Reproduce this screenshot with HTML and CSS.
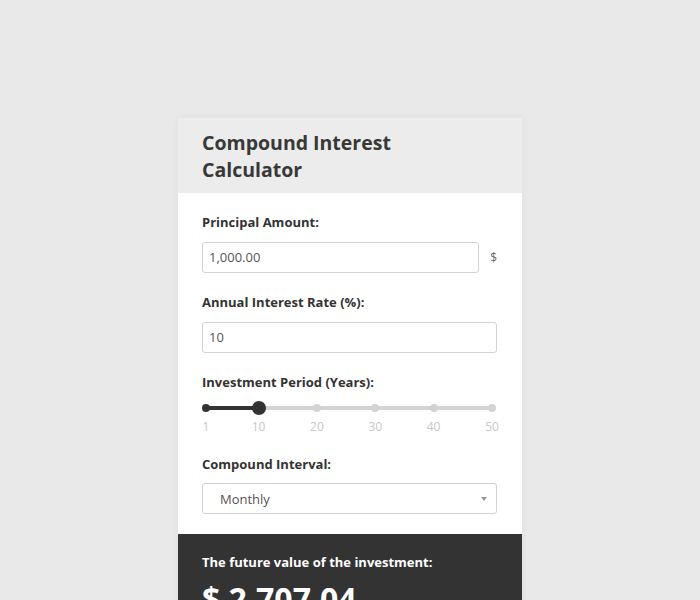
FILE: index.html
```html
<!DOCTYPE html>
<html lang="en">
<head>
<meta charset="utf-8">
<title>Compound Interest Calculator</title>
<link rel="stylesheet" href="styles.css">
</head>
<body>
<div class="card">
  <div class="card-head">
    <h1 class="title">Compound Interest Calculator</h1>
  </div>
  <div class="card-body">
    <div class="field">
      <label class="label">Principal Amount:</label>
      <div class="input-row">
        <div class="input">1,000.00</div>
        <span class="suffix">$</span>
      </div>
    </div>
    <div class="field">
      <label class="label">Annual Interest Rate (%):</label>
      <div class="input">10</div>
    </div>
    <div class="field field-slider">
      <label class="label">Investment Period (Years):</label>
      <div class="slider">
        <div class="track">
          <div class="track-fill" style="width:18.37%"></div>
          <span class="dot dot-on" style="left:0%"></span>
          <span class="dot" style="left:38.78%"></span>
          <span class="dot" style="left:59.18%"></span>
          <span class="dot" style="left:79.59%"></span>
          <span class="dot" style="left:100%"></span>
          <span class="handle" style="left:18.37%"></span>
        </div>
        <div class="ticks">
          <span class="tick" style="left:0%">1</span>
          <span class="tick" style="left:18.37%">10</span>
          <span class="tick" style="left:38.78%">20</span>
          <span class="tick" style="left:59.18%">30</span>
          <span class="tick" style="left:79.59%">40</span>
          <span class="tick" style="left:100%">50</span>
        </div>
      </div>
    </div>
    <div class="field field-last">
      <label class="label">Compound Interval:</label>
      <div class="select">
        <span>Monthly</span>
        <span class="caret"></span>
      </div>
    </div>
  </div>
  <div class="card-result">
    <div class="result-label">The future value of the investment:</div>
    <div class="result-value">$ 2,707.04</div>
  </div>
</div>
</body>
</html>
```
FILE: styles.css
```css
* { box-sizing: border-box; }
html, body { margin: 0; padding: 0; }
body {
  background: #e9e9e9;
  font-family: "Open Sans", "Noto Sans", "Liberation Sans", sans-serif;
  color: #333;
  padding-top: 118px;
}
.card {
  width: 344px;
  margin: 0 auto;
  background: #fff;
  box-shadow: 0 0 8px rgba(0,0,0,0.05);
  border-radius: 3px 3px 0 0;
}
.card-head {
  background: #ececec;
  padding: 11px 24px 10px;
  border-radius: 3px 3px 0 0;
}
.title {
  margin: 0;
  font-size: 19.5px;
  font-weight: 700;
  line-height: 27px;
  color: #383838;
  width: 220px;
}
.card-body {
  padding: 20px 25px 20px 24px;
}
.field { margin-bottom: 20px; }
.field-last { margin-bottom: 0; }
.field-slider { margin-bottom: 20px; }
.label {
  display: block;
  font-size: 13px;
  font-weight: 700;
  line-height: 18px;
  color: #333;
  margin-bottom: 11px;
}
.field-last .label { margin-bottom: 10px; }
.input-row {
  display: flex;
  align-items: center;
}
.input-row .input { flex: 1; }
.suffix {
  width: 18px;
  text-align: right;
  font-size: 12px;
  color: #666;
}
.input {
  height: 31px;
  border: 1px solid #d2d2d2;
  border-radius: 3px;
  padding: 0 6px;
  font-size: 13px;
  line-height: 29px;
  color: #555;
  background: #fff;
}
.slider {
  margin-top: -1px;
  padding: 0 5px 0 4px;
}
.track {
  position: relative;
  height: 14px;
}
.track::before {
  content: "";
  position: absolute;
  left: 0; right: 0;
  top: 5px;
  height: 4px;
  background: #d3d3d3;
  border-radius: 2px;
}
.track-fill {
  position: absolute;
  left: 0;
  top: 5px;
  height: 4px;
  background: #333;
}
.dot {
  position: absolute;
  top: 3px;
  width: 8px;
  height: 8px;
  margin-left: -4px;
  border-radius: 50%;
  background: #d3d3d3;
}
.dot-on { background: #333; }
.handle {
  position: absolute;
  top: 0;
  width: 14px;
  height: 14px;
  margin-left: -7px;
  border-radius: 50%;
  background: #333;
}
.ticks {
  position: relative;
  height: 16px;
  margin-top: 4px;
}
.tick {
  position: absolute;
  top: 0;
  transform: translateX(-50%);
  font-size: 12px;
  line-height: 16px;
  color: #c8c8c8;
}
.select {
  height: 31px;
  border: 1px solid #d2d2d2;
  border-radius: 3px;
  padding: 0 9px 0 17px;
  display: flex;
  align-items: center;
  justify-content: space-between;
  font-size: 13px;
  color: #555;
}
.caret {
  width: 0; height: 0;
  border-left: 3px solid transparent;
  border-right: 3px solid transparent;
  border-top: 4px solid #999;
}
.card-result {
  background: #333;
  color: #fff;
  padding: 19px 24px 24px;
}
.result-label {
  font-size: 13px;
  font-weight: 700;
  line-height: 18px;
}
.result-value {
  margin-top: 8px;
  font-size: 32px;
  font-weight: 700;
  line-height: 40px;
}
```
